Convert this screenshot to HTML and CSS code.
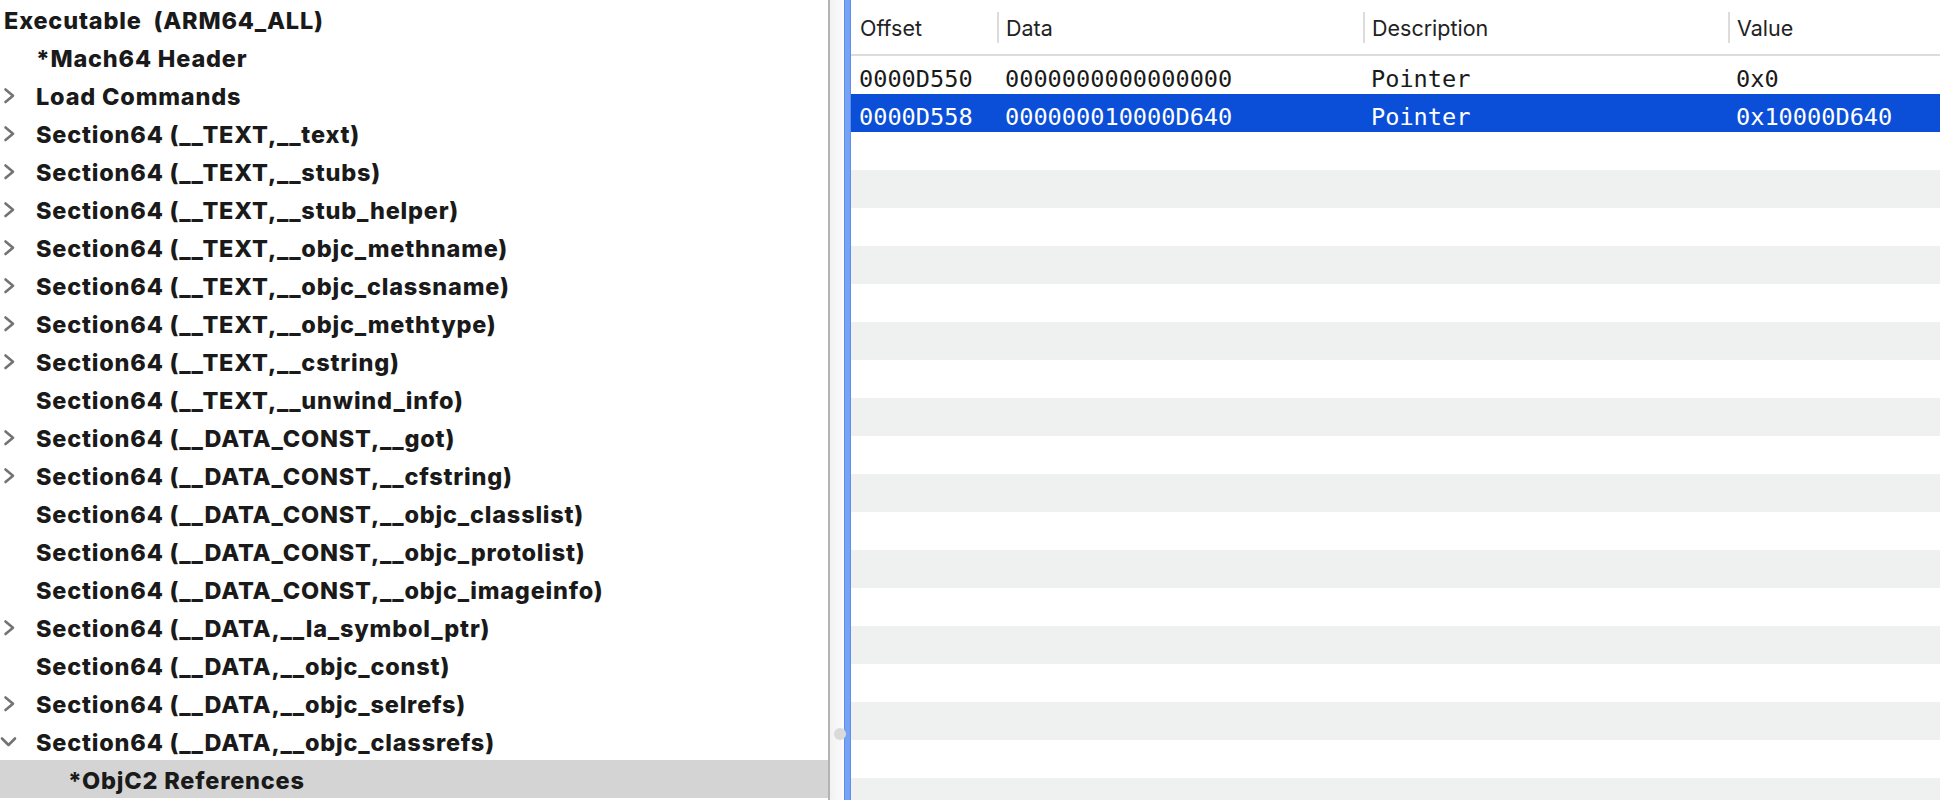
FILE: index.html
```html
<!DOCTYPE html>
<html>
<head>
<meta charset="utf-8">
<link rel="stylesheet" href="styles.css">
</head>
<body>
<div class="app">
  <div class="tree">
    <div class="node lvl0"><span class="label">Executable&nbsp; (ARM64_ALL)</span></div>
    <div class="node lvl1"><span class="chev"></span><span class="label">*Mach64 Header</span></div>
    <div class="node lvl1"><span class="chev"><svg viewBox="0 0 20 20" width="20" height="20"><path d="M5.5 3.5 L13 9.75 L5.5 16" /></svg></span><span class="label">Load Commands</span></div>
    <div class="node lvl1"><span class="chev"><svg viewBox="0 0 20 20" width="20" height="20"><path d="M5.5 3.5 L13 9.75 L5.5 16" /></svg></span><span class="label">Section64 (__TEXT,__text)</span></div>
    <div class="node lvl1"><span class="chev"><svg viewBox="0 0 20 20" width="20" height="20"><path d="M5.5 3.5 L13 9.75 L5.5 16" /></svg></span><span class="label">Section64 (__TEXT,__stubs)</span></div>
    <div class="node lvl1"><span class="chev"><svg viewBox="0 0 20 20" width="20" height="20"><path d="M5.5 3.5 L13 9.75 L5.5 16" /></svg></span><span class="label">Section64 (__TEXT,__stub_helper)</span></div>
    <div class="node lvl1"><span class="chev"><svg viewBox="0 0 20 20" width="20" height="20"><path d="M5.5 3.5 L13 9.75 L5.5 16" /></svg></span><span class="label">Section64 (__TEXT,__objc_methname)</span></div>
    <div class="node lvl1"><span class="chev"><svg viewBox="0 0 20 20" width="20" height="20"><path d="M5.5 3.5 L13 9.75 L5.5 16" /></svg></span><span class="label">Section64 (__TEXT,__objc_classname)</span></div>
    <div class="node lvl1"><span class="chev"><svg viewBox="0 0 20 20" width="20" height="20"><path d="M5.5 3.5 L13 9.75 L5.5 16" /></svg></span><span class="label">Section64 (__TEXT,__objc_methtype)</span></div>
    <div class="node lvl1"><span class="chev"><svg viewBox="0 0 20 20" width="20" height="20"><path d="M5.5 3.5 L13 9.75 L5.5 16" /></svg></span><span class="label">Section64 (__TEXT,__cstring)</span></div>
    <div class="node lvl1"><span class="chev"></span><span class="label">Section64 (__TEXT,__unwind_info)</span></div>
    <div class="node lvl1"><span class="chev"><svg viewBox="0 0 20 20" width="20" height="20"><path d="M5.5 3.5 L13 9.75 L5.5 16" /></svg></span><span class="label">Section64 (__DATA_CONST,__got)</span></div>
    <div class="node lvl1"><span class="chev"><svg viewBox="0 0 20 20" width="20" height="20"><path d="M5.5 3.5 L13 9.75 L5.5 16" /></svg></span><span class="label">Section64 (__DATA_CONST,__cfstring)</span></div>
    <div class="node lvl1"><span class="chev"></span><span class="label">Section64 (__DATA_CONST,__objc_classlist)</span></div>
    <div class="node lvl1"><span class="chev"></span><span class="label">Section64 (__DATA_CONST,__objc_protolist)</span></div>
    <div class="node lvl1"><span class="chev"></span><span class="label">Section64 (__DATA_CONST,__objc_imageinfo)</span></div>
    <div class="node lvl1"><span class="chev"><svg viewBox="0 0 20 20" width="20" height="20"><path d="M5.5 3.5 L13 9.75 L5.5 16" /></svg></span><span class="label">Section64 (__DATA,__la_symbol_ptr)</span></div>
    <div class="node lvl1"><span class="chev"></span><span class="label">Section64 (__DATA,__objc_const)</span></div>
    <div class="node lvl1"><span class="chev"><svg viewBox="0 0 20 20" width="20" height="20"><path d="M5.5 3.5 L13 9.75 L5.5 16" /></svg></span><span class="label">Section64 (__DATA,__objc_selrefs)</span></div>
    <div class="node lvl1"><span class="chev"><svg viewBox="0 0 20 20" width="20" height="20"><path d="M2 6.5 L8.5 13 L15 6.5" /></svg></span><span class="label">Section64 (__DATA,__objc_classrefs)</span></div>
    <div class="node lvl2 selected"><span class="label">*ObjC2 References</span></div>
  </div>

  <div class="divider">
    <div class="split-line"></div>
    <div class="split-gap"><span class="handle"></span></div>
    <div class="focus-line"></div>
  </div>

  <div class="table">
    <div class="thead">
      <div class="th">Offset</div>
      <div class="th sep">Data</div>
      <div class="th sep">Description</div>
      <div class="th sep">Value</div>
    </div>
    <div class="tbody">
      <div class="tr"><div class="td">0000D550</div><div class="td">0000000000000000</div><div class="td">Pointer</div><div class="td">0x0</div></div>
      <div class="tr sel"><div class="td">0000D558</div><div class="td">000000010000D640</div><div class="td">Pointer</div><div class="td">0x10000D640</div></div>
      <div class="tr"></div><div class="tr"></div><div class="tr"></div><div class="tr"></div>
      <div class="tr"></div><div class="tr"></div><div class="tr"></div><div class="tr"></div>
      <div class="tr"></div><div class="tr"></div><div class="tr"></div><div class="tr"></div>
      <div class="tr"></div><div class="tr"></div><div class="tr"></div><div class="tr"></div>
      <div class="tr"></div><div class="tr"></div>
    </div>
  </div>
</div>
</body>
</html>
```

FILE: styles.css
```css
html, body {
  margin: 0;
  padding: 0;
  background: #ffffff;
  overflow: hidden;
}

.app {
  display: flex;
  width: 1940px;
  height: 800px;
}

/* ---------- tree ---------- */
.tree {
  width: 828px;
  flex: none;
  display: flex;
  flex-direction: column;
  font-family: Inter, "Liberation Sans", sans-serif;
  font-weight: 780;
  font-size: 23.5px;
  letter-spacing: 0.8px;
  color: #1a1a1a;
}

.node {
  height: 38px;
  display: flex;
  align-items: center;
  padding-top: 2px;
  box-sizing: border-box;
  white-space: nowrap;
}

.lvl0 { padding-left: 4px; }
.lvl1 { padding-left: 0; }
.lvl2 { padding-left: 68px; }

.chev {
  width: 36px;
  flex: none;
  display: flex;
  align-items: center;
  box-sizing: border-box;
  margin-top: -1px;
}

.chev svg path {
  fill: none;
  stroke: #737373;
  stroke-width: 2.6;
  stroke-linecap: round;
  stroke-linejoin: round;
}

.node.selected {
  background: #d4d4d4;
}

/* ---------- divider ---------- */
.divider {
  width: 23px;
  flex: none;
  display: flex;
}

.split-line {
  width: 2px;
  background: #b4b4b4;
}

.split-gap {
  width: 14px;
  background: linear-gradient(to right, #f2f2f2, #fbfbfb);
  position: relative;
}

.handle {
  position: absolute;
  left: 4px;
  top: 728px;
  width: 12px;
  height: 12px;
  border-radius: 50%;
  background: #dadada;
}

.focus-line {
  width: 7px;
  box-sizing: border-box;
  background: #77a3f4;
  border-left: 1px solid #5f8ded;
  border-right: 1px solid #5f8ded;
}

/* ---------- table ---------- */
.table {
  flex: 1;
  display: flex;
  flex-direction: column;
  min-width: 0;
}

.thead {
  height: 56px;
  flex: none;
  box-sizing: border-box;
  border-bottom: 2px solid #dcdcdc;
  display: grid;
  grid-template-columns: 146px 366px 365px 1fr;
  font-family: Inter, "Liberation Sans", sans-serif;
  font-size: 21.5px;
  color: #222;
}

.th {
  display: flex;
  align-items: center;
  padding-left: 9px;
  padding-top: 1px;
  position: relative;
}

.th.sep::before {
  content: "";
  position: absolute;
  left: 0;
  top: 12px;
  width: 2px;
  height: 31px;
  background: #dcdcdc;
}

.tbody {
  display: flex;
  flex-direction: column;
}

.tr {
  height: 38px;
  flex: none;
  display: grid;
  grid-template-columns: 146px 366px 365px 1fr;
  font-family: "DejaVu Sans Mono", "Liberation Mono", monospace;
  font-size: 23.6px;
  color: #1a1a1a;
}

.tr:nth-child(even) {
  background: #eff1f0;
}

.tr.sel {
  background: #0b4fd9;
  color: #ffffff;
}

.td {
  display: flex;
  align-items: center;
  padding-left: 8px;
  padding-top: 8px;
  white-space: nowrap;
}
```
